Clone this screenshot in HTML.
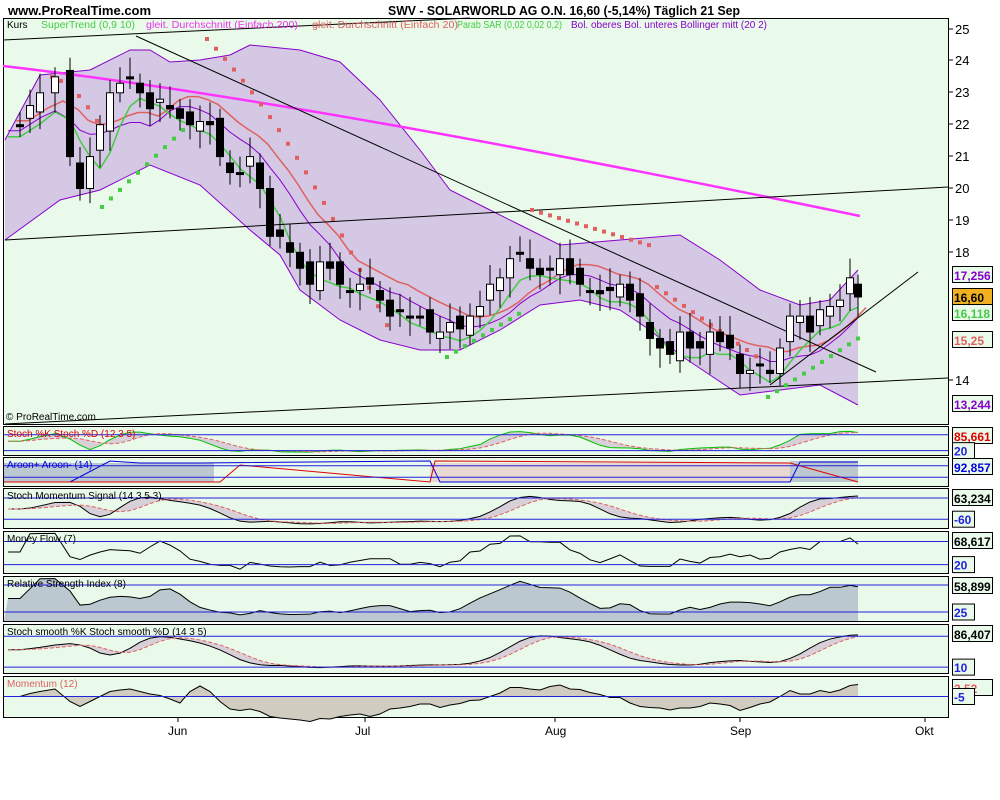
<!DOCTYPE html>
<html><head><meta charset="utf-8"><style>
body{margin:0;background:#fff;width:1000px;height:800px;overflow:hidden;font-family:"Liberation Sans",sans-serif}
svg{position:absolute;left:0;top:0}
</style></head><body>
<svg id="s" width="1000" height="800" xmlns="http://www.w3.org/2000/svg" font-family="Liberation Sans, sans-serif">
<text x="8" y="15" font-size="13" font-weight="bold">www.ProRealTime.com</text>
<text x="388" y="15" font-size="13" font-weight="bold" textLength="352" lengthAdjust="spacingAndGlyphs">SWV - SOLARWORLD AG O.N.    16,60 (-5,14%)    Täglich  21 Sep</text>
<rect x="3.5" y="18.5" width="945" height="406" fill="#eafaea" stroke="#000"/>
<g id="main"></g>
<g font-size="10">
<text x="7" y="28">Kurs</text>
<text x="41" y="28" fill="#44cc44" textLength="94" lengthAdjust="spacingAndGlyphs">SuperTrend (0,9 10)</text>
<text x="146" y="28" fill="#ee33ee" textLength="152" lengthAdjust="spacingAndGlyphs">gleit. Durchschnitt (Einfach 200)</text>
<text x="312" y="28" fill="#e06060" textLength="146" lengthAdjust="spacingAndGlyphs">gleit. Durchschnitt (Einfach 20)</text>
<text x="457" y="28" fill="#44cc44" textLength="105" lengthAdjust="spacingAndGlyphs">Parab SAR (0,02 0,02 0,2)</text>
<text x="571" y="28" fill="#8800cc" textLength="196" lengthAdjust="spacingAndGlyphs">Bol. oberes Bol. unteres Bollinger mitt (20 2)</text>
<text x="6" y="420" font-size="10">© ProRealTime.com</text>
</g>
<g id="sub"></g>
<g id="axis" font-size="13"></g>
</svg>
<script>
var NS="http://www.w3.org/2000/svg";
function el(p,t,a,txt){var e=document.createElementNS(NS,t);for(var k in a)e.setAttribute(k,a[k]);if(txt!==undefined)e.textContent=txt;p.appendChild(e);return e;}
function Y(p){return 29+(25-p)*31.9;}
var M=document.getElementById('main');
function poly(pts){return pts.map(function(p){return p[0]+','+p[1]}).join(' ');}
var up=[[5,140],[40,75],[90,70],[130,50],[150,50],[170,62],[200,60],[230,55],[250,45],[300,50],[340,62],[380,100],[420,150],[450,190],[490,210],[520,225],[560,245],[620,240],[680,235],[720,260],[760,290],[800,305],[830,300],[858,270]];
var lo=[[858,405],[820,385],[780,390],[740,395],[710,375],[680,355],[650,330],[620,310],[580,300],[540,305],[500,330],[460,350],[420,350],[380,340],[340,320],[300,290],[280,255],[250,230],[200,185],[150,165],[100,190],[60,200],[5,240]];
el(M,'polygon',{points:poly(up.concat(lo)),fill:'#d4c8e4'});
el(M,'polyline',{points:poly(up),fill:'none',stroke:'#8800cc'});
el(M,'polyline',{points:poly(lo),fill:'none',stroke:'#8800cc'});
var cl=[[8,22],[20,22],[30,22.6],[40,23],[55,23.5],[70,21],[80,20],[90,21],[100,22],[110,23],[120,23.3],[130,23.5],[140,23],[150,22.5],[160,22.8],[170,22.5],[180,22.2],[190,22],[200,22.1],[210,22],[220,21],[230,20.5],[240,20.5],[250,21],[260,20],[270,18.5],[280,18.5],[290,18],[300,17.5],[310,17],[320,17.7],[330,17.5],[340,17],[350,16.8],[360,17],[370,17],[380,16.5],[390,16],[400,16.2],[410,16],[420,16],[430,15.5],[440,15.5],[450,15.8],[460,15.6],[470,16],[480,16.3],[490,17],[500,17.2],[510,17.8],[520,18],[530,17.5],[540,17.3],[550,17.5],[560,17.8],[570,17.3],[580,17],[590,16.8],[600,16.7],[610,16.8],[620,17],[630,16.5],[640,16],[650,15.3],[660,15],[670,14.8],[680,15.5],[690,15],[700,15],[710,15.5],[720,15.2],[730,15],[740,14.2],[750,14.3],[760,14.5],[770,14.2],[780,15],[790,16],[800,16],[810,15.5],[820,16.2],[830,16.3],[840,16.5],[850,17.2],[858,16.6]];
var mid=cl.map(function(c,i){var s=0,n=0;for(var j=Math.max(0,i-8);j<=i;j++){s+=cl[j][1];n++;}return [c[0],Y(s/n)];});
el(M,'polyline',{points:poly(mid.map(function(p){return [p[0],p[1]+6]})),fill:'none',stroke:'#8800cc','stroke-width':1});
el(M,'polyline',{points:poly(mid.map(function(p){return [p[0]+8,p[1]-4]})),fill:'none',stroke:'#e06060','stroke-width':1.5});
var st=cl.map(function(c,i){var s=0,n=0;for(var j=Math.max(0,i-3);j<=i;j++){s+=cl[j][1];n++;}return [c[0],Y(s/n)+12];});
el(M,'polyline',{points:poly(st),fill:'none',stroke:'#44cc44','stroke-width':1.5});
el(M,'path',{d:'M3,66 Q300,100 860,216',fill:'none',stroke:'#ff33ff','stroke-width':2.5});
el(M,'line',{x1:3,y1:40,x2:470,y2:18,stroke:'#000'});
el(M,'line',{x1:5,y1:240,x2:948,y2:187,stroke:'#000'});
el(M,'line',{x1:136,y1:36,x2:876,y2:372,stroke:'#000'});
el(M,'line',{x1:5,y1:424,x2:948,y2:378,stroke:'#000'});
el(M,'line',{x1:770,y1:385,x2:918,y2:272,stroke:'#000'});
function dot(x,y,c){el(M,'rect',{x:x,y:y,width:4,height:4,fill:c});}
var R='#e06060',G='#44cc44';
for(var x=50;x<=95;x+=9)dot(x,75+(x-50)*0.05*(x-50)*0.3+(x-50)*0.3,R);
for(var x=100;x<=195;x+=9)dot(x,205-(x-100)*0.95,G);
for(var x=205;x<=390;x+=9)dot(x,37+(x-205)*1.05+(x-205)*(x-205)*0.003,R);
for(var x=445;x<=525;x+=9)dot(x,355-(x-445)*0.6,G);
for(var x=530;x<=650;x+=9)dot(x,208+(x-530)*0.3,R);
for(var x=655;x<=760;x+=9)dot(x,285+(x-655)*0.7,R);
for(var x=766;x<=858;x+=9)dot(x,395-(x-766)*0.65,G);
for(var i=1;i<cl.length;i++){var o=cl[i-1][1]+(i%3-1)*0.2,c=cl[i][1],x=cl[i][0];var hi=Math.max(o,c)+0.3+(i%4)*0.1,lw=Math.min(o,c)-0.3-(i%5)*0.08;
el(M,'line',{x1:x,y1:Y(hi),x2:x,y2:Y(lw),stroke:'#000'});
var t=Math.min(Y(o),Y(c)),h=Math.max(2,Math.abs(Y(o)-Y(c)));
el(M,'rect',{x:x-3.5,y:t,width:7,height:h,fill:c>o?'#fff':'#000',stroke:'#000'});}
var A=document.getElementById('axis');
[[25,29],[24,60],[23,92],[22,124],[21,156],[20,188],[19,220],[18,252],[14,380]].forEach(function(v){el(A,'line',{x1:949,y1:v[1],x2:953,y2:v[1],stroke:'#000'});el(A,'text',{x:955,y:v[1]+5},v[0]);});
function box(y,txt,col,bg){el(A,'rect',{x:952.5,y:y-8.5,width:40,height:16,fill:bg||'#eafaea',stroke:'#000'});el(A,'text',{x:954,y:y+5,fill:col,'font-weight':'bold','font-size':12},txt);}
box(275,'17,256','#8800cc');box(297,'16,60','#000','#f0b020');box(313,'16,118','#44cc44');box(340,'15,25','#e06060');box(404,'13,244','#8800cc');
// indicator series from closes
var C=cl.map(function(c){return c[1]});var X=cl.map(function(c){return c[0]});
function sma(a,n){return a.map(function(v,i){var s=0,k=0;for(var j=Math.max(0,i-n+1);j<=i;j++){s+=a[j];k++;}return s/k;});}
var K=C.map(function(v,i){var hi=-1e9,lw=1e9;for(var j=Math.max(0,i-11);j<=i;j++){hi=Math.max(hi,C[j]+0.3);lw=Math.min(lw,C[j]-0.3);}return (v-lw)/(hi-lw);});
var K3=sma(K,3),D5=sma(K3,5);
var K6=sma(sma(K,4),4),D6=sma(K6,4);
var MOM=C.map(function(v,i){return v-C[Math.max(0,i-12)];});
var RSI=C.map(function(v,i){var u=0,d=0;for(var j=Math.max(1,i-7);j<=i;j++){var df=C[j]-C[j-1];if(df>0)u+=df;else d-=df;}return (u+0.01)/(u+d+0.02);});
var RSIs=sma(RSI,2);
var S=document.getElementById('sub');
var P=[[426,455,'Stoch %K Stoch %D (12 3 5)','#e00000',[0.3,0.85],'85,661','#e00000','20'],
[457,486,'Aroon+ Aroon- (14)','#0000e0',[0.3,0.7],'92,857','#0000e0',''],
[488,528,'Stoch Momentum Signal (14 3 5 3)','#000',[0.25,0.78],'63,234','#000','-60'],
[531,573,'Money Flow (7)','#000',[0.25,0.8],'68,617','#000','20'],
[576,621,'Relative Strength Index (8)','#000',[0.2,0.8],'58,899','#000','25'],
[624,673,'Stoch smooth %K Stoch smooth %D (14 3 5)','#000',[0.25,0.88],'86,407','#000','10'],
[676,717,'Momentum (12)','#e06060',[0.5,0.5],'2,52','#e06060','-5']];
function ser(arr,t,h,lo,hi){return arr.map(function(v,i){return [X[i],t+h*(hi-(hi-lo)*v)];});}
P.forEach(function(p,k){var t=p[0],b=p[1],h=b-t;
el(S,'rect',{x:3.5,y:t+.5,width:945,height:h,fill:'#eafaea',stroke:'#000'});
var l1=t+h*p[4][0],l2=t+h*p[4][1];
if(k==1){el(S,'rect',{x:4,y:t+6,width:210,height:h-10,fill:'#bcc8d0'});el(S,'rect',{x:430,y:t+6,width:360,height:h-10,fill:'#e8d8d0'});el(S,'rect',{x:790,y:t+4,width:68,height:h-8,fill:'#bcc8d0'});
el(S,'polyline',{points:'4,'+(t+25)+' 70,'+(t+25)+' 110,'+(t+4)+' 140,'+(t+6)+' 200,'+(t+6)+' 430,'+(t+4)+' 440,'+(t+25)+' 790,'+(t+25)+' 800,'+(t+5)+' 858,'+(t+5),fill:'none',stroke:'#0000e0'});
el(S,'polyline',{points:'4,'+(t+25)+' 220,'+(t+25)+' 240,'+(t+8)+' 430,'+(t+25)+' 435,'+(t+4)+' 790,'+(t+6)+' 858,'+(t+25),fill:'none',stroke:'#e00000'});}
else if(k==4){var pts=ser(RSIs,t,h,0.05,0.95);el(S,'polygon',{points:poly(pts.concat([[858,b],[4,b]])),fill:'#bcc8d0'});el(S,'polyline',{points:poly(pts),fill:'none',stroke:'#000'});}
else if(k==6){var pts=MOM.map(function(v,i){return [X[i],l1-v*5];});el(S,'polygon',{points:poly(pts.concat([[858,l1],[4,l1]])),fill:'#d0ccc0'});el(S,'polyline',{points:poly(pts),fill:'none',stroke:'#000'});}
else if(k==3){var pts=ser(sma(RSI,1),t,h,0.05,0.95);el(S,'polyline',{points:poly(pts),fill:'none',stroke:'#000'});}
else{var a=k==0?K3:k==2?sma(K3,3):K6,d=k==0?D5:k==2?sma(D5,3):D6;var pk=ser(a,t,h,0.1,0.95),pd=ser(d,t,h,0.1,0.95);
el(S,'polygon',{points:poly(pk.concat(pd.slice().reverse())),fill:'#d8d0d8'});
el(S,'polyline',{points:poly(pk),fill:'none',stroke:k==0?'#00c000':'#000'});el(S,'polyline',{points:poly(pd),fill:'none',stroke:'#e06060','stroke-dasharray':'4 2'});}
el(S,'line',{x1:4,y1:l1,x2:948,y2:l1,stroke:'#2222dd'});
if(l2!=l1)el(S,'line',{x1:4,y1:l2,x2:948,y2:l2,stroke:'#2222dd'});
el(S,'text',{x:7,y:t+11,'font-size':10,fill:p[3]},p[2]);
box(t+(k==6?12:10),p[5],p[6]);
if(p[7]){el(A,'rect',{x:952.5,y:l2-8,width:22,height:16,fill:'#eafaea',stroke:'#000'});el(A,'text',{x:954,y:l2+5,fill:'#2222dd','font-weight':'bold','font-size':12},p[7]);}
});
[['Jun',178],['Jul',365],['Aug',555],['Sep',740],['Okt',925]].forEach(function(m){el(A,'line',{x1:m[1],y1:717,x2:m[1],y2:722,stroke:'#000'});el(A,'text',{x:m[1]-10,y:735,'font-size':12},m[0]);});
</script>
</body></html>
